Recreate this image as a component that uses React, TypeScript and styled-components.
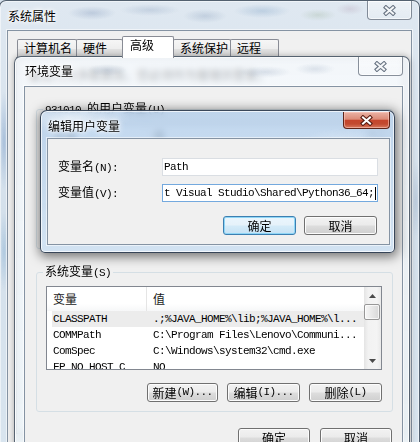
import React from "react";
import styled, { createGlobalStyle, css } from "styled-components";

const CJK = `"Noto Sans CJK SC", "Noto Sans", sans-serif`;
const MONO = `"Liberation Mono", "DejaVu Sans Mono", "Noto Sans CJK SC", monospace`;

const GlobalStyle = createGlobalStyle`
  html, body { margin: 0; padding: 0; }
  body {
    width: 420px;
    height: 442px;
    overflow: hidden;
    background: #d6e1ec;
    font-family: ${CJK};
    font-size: 12px;
    color: #000;
  }
  *, *::before, *::after { box-sizing: border-box; }
`;

const Lat = styled.span`
  font-family: ${MONO};
  font-size: 11px;
  letter-spacing: -0.6px;
`;

const Desktop = styled.div`
  position: relative;
  width: 420px;
  height: 442px;
  overflow: hidden;
`;

/* ---------- window frames ---------- */

const frameBase = css`
  position: absolute;
  display: flex;
  flex-direction: column;
  border: 1px solid rgba(38, 52, 70, 0.75);
  border-radius: 7px 7px 5px 5px;
`;

const SysWindow = styled.div`
  ${frameBase}
  left: -1px;
  top: 0;
  width: 421px;
  height: 480px;
  padding: 0 7px 8px 7px;
  background:
    radial-gradient(24px 7px at 92px 12px, rgba(70, 100, 150, 0.22), transparent),
    radial-gradient(30px 6px at 150px 9px, rgba(90, 120, 160, 0.2), transparent),
    radial-gradient(22px 7px at 205px 15px, rgba(80, 110, 150, 0.2), transparent),
    radial-gradient(28px 7px at 262px 10px, rgba(70, 120, 170, 0.22), transparent),
    radial-gradient(18px 6px at 318px 14px, rgba(120, 150, 110, 0.2), transparent),
    radial-gradient(14px 6px at 350px 8px, rgba(150, 110, 140, 0.18), transparent),
    radial-gradient(5px 50px at 4px 140px, rgba(60, 110, 175, 0.3), transparent),
    radial-gradient(5px 40px at 4px 250px, rgba(80, 140, 190, 0.28), transparent),
    radial-gradient(5px 40px at 416px 200px, rgba(90, 120, 160, 0.2), transparent),
    linear-gradient(180deg, #dfe8f1 0%, #d4e0eb 45%, #d9e5ef 100%);
  box-shadow: inset 0 0 0 1px rgba(255, 255, 255, 0.5);
`;

const EnvWindow = styled.div`
  ${frameBase}
  left: 14px;
  top: 56px;
  width: 396px;
  height: 404px;
  padding: 0 6px 8px 9px;
  background:
    radial-gradient(20px 6px at 92px 13px, rgba(90, 115, 150, 0.2), transparent),
    radial-gradient(26px 6px at 250px 15px, rgba(90, 115, 150, 0.18), transparent),
    radial-gradient(20px 6px at 300px 12px, rgba(90, 115, 150, 0.16), transparent),
    linear-gradient(180deg, rgba(240, 245, 250, 0.7) 0%, rgba(232, 242, 248, 0.66) 100%);
  backdrop-filter: blur(3px);
  box-shadow: 0 0 6px rgba(0, 0, 0, 0.3), inset 0 0 0 1px rgba(255, 255, 255, 0.75);
`;

const EditDialog = styled.div`
  ${frameBase}
  left: 40px;
  top: 110px;
  width: 355px;
  height: 143px;
  padding: 0 4px 7px 6px;
  background:
    radial-gradient(60px 16px at 30px 6px, rgba(255, 255, 255, 0.5), transparent),
    radial-gradient(40px 12px at 300px 30px, rgba(255, 255, 255, 0.25), transparent),
    linear-gradient(180deg, rgba(178, 205, 234, 0.8) 0%, rgba(190, 214, 238, 0.8) 50%, rgba(204, 224, 243, 0.82) 100%);
  backdrop-filter: blur(3px);
  border-color: rgba(30, 44, 62, 0.85);
  box-shadow: 1px 2px 11px 2px rgba(0, 0, 0, 0.5), inset 0 0 0 1px rgba(255, 255, 255, 0.7);
`;

const TitleBar = styled.div<{ $h: number }>`
  display: flex;
  justify-content: space-between;
  align-items: flex-start;
  height: ${(p) => p.$h}px;
  flex: none;
`;

const TitleText = styled.div<{ $mt: number }>`
  margin: ${(p) => p.$mt}px 0 0 1px;
  line-height: 15px;
  font-size: 12px;
  white-space: nowrap;
  text-shadow: 0 0 6px #fff, 0 0 5px #fff, 0 0 2px #fff;
`;

const CloseBtn = styled.div<{ $w: number; $h: number; $mt: number; $active?: boolean }>`
  width: ${(p) => p.$w}px;
  height: ${(p) => p.$h}px;
  margin-top: ${(p) => p.$mt}px;
  flex: none;
  display: flex;
  align-items: center;
  justify-content: center;
  border: 1px solid rgba(45, 58, 75, 0.55);
  border-top: none;
  border-radius: 0 0 4px 4px;
  background: linear-gradient(rgba(255, 255, 255, 0.45), rgba(255, 255, 255, 0.18));
  box-shadow: inset 0 0 0 1px rgba(255, 255, 255, 0.6);
  ${(p) =>
    p.$active &&
    css`
      border-color: #5e2419;
      background: linear-gradient(#eab3a5 0%, #dc8b78 45%, #c5452c 52%, #c24a30 75%, #d87a60 100%);
      box-shadow: inset 0 0 0 1px rgba(255, 205, 195, 0.55);
    `}
`;

const XGlyph = ({ fill, stroke }: { fill: string; stroke: string }) => (
  <svg width="13" height="11" viewBox="0 0 13 11">
    <path d="M3 2.5 L10 8.5 M10 2.5 L3 8.5" stroke={stroke} strokeWidth="4.2" strokeLinecap="square" fill="none" />
    <path d="M3 2.5 L10 8.5 M10 2.5 L3 8.5" stroke={fill} strokeWidth="2" strokeLinecap="square" fill="none" />
  </svg>
);

const clientBase = css`
  flex: 1;
  min-height: 0;
  display: flex;
  flex-direction: column;
  background: #f0f0f0;
  border: 1px solid #8593a3;
  box-shadow: 0 0 0 1px rgba(255, 255, 255, 0.55);
`;

/* ---------- System properties client ---------- */

const SysClient = styled.div`
  ${clientBase}
`;

const TabStrip = styled.div`
  display: flex;
  align-items: flex-end;
  height: 21px;
  margin: 5px 0 0 9px;
  flex: none;
`;

const Tab = styled.div<{ $w: number; $active?: boolean }>`
  position: relative;
  width: ${(p) => p.$w}px;
  height: 18px;
  margin-left: -1px;
  padding: 1px 0 0 6px;
  line-height: 14px;
  white-space: nowrap;
  border: 1px solid #898c95;
  border-bottom: none;
  border-radius: 2px 2px 0 0;
  background: linear-gradient(#f6f6f6 0%, #eeeeee 50%, #e2e2e2 51%, #d9d9d9 100%);
  &:first-child { margin-left: 0; }
  ${(p) =>
    p.$active &&
    css`
      z-index: 1;
      height: 22px;
      margin-bottom: -1px;
      padding-left: 7px;
      background: #fff;
    `}
`;

const TabPanel = styled.div`
  margin: 0 7px 0 8px;
  height: 377px;
  flex: none;
  border: 1px solid #898c95;
  background: #fbfbfb;
  padding: 9px 12px;
`;

const PanelNote = styled.div`
  line-height: 16px;
  white-space: nowrap;
`;

/* ---------- environment variables client ---------- */

const EnvClient = styled.div`
  ${clientBase}
  padding: 0 9px 0 11px;
`;

const Group = styled.fieldset<{ $mt: number }>`
  margin: ${(p) => p.$mt}px 0 0;
  padding: 0 10px 9px 9px;
  border: 1px solid #d5dfe5;
  border-radius: 3px;
  min-width: 0;
  flex: none;
`;

const Legend = styled.legend`
  margin-left: -3px;
  padding: 0 2px;
  line-height: 14px;
  font-size: 12px;
  white-space: nowrap;
`;

const ListView = styled.div`
  margin-top: 6px;
  height: 84px;
  display: flex;
  border: 1px solid #828790;
  background: #fff;
`;

const ListMain = styled.div`
  flex: 1;
  min-width: 0;
  display: flex;
  flex-direction: column;
  overflow: hidden;
`;

const ListHeader = styled.div`
  display: flex;
  height: 24px;
  flex: none;
  background: linear-gradient(#ffffff 0%, #ffffff 70%, #f6f7f8 100%);
`;

const HeaderCell = styled.div<{ $w?: number }>`
  ${(p) => (p.$w ? `width: ${p.$w}px; flex: none; border-right: 1px solid #e5e5e5;` : "flex: 1;")}
  padding-left: 6px;
  line-height: 24px;
  font-size: 12px;
  color: #1a1a1a;
  white-space: nowrap;
`;

const Row = styled.div<{ $selected?: boolean }>`
  display: flex;
  height: 16px;
  flex: none;
  margin-left: 5px;
  background: ${(p) => (p.$selected ? "#ececec" : "transparent")};
`;

const Cell = styled.div<{ $w?: number; $pl: number }>`
  ${(p) => (p.$w ? `width: ${p.$w}px; flex: none;` : "flex: 1; min-width: 0;")}
  padding-left: ${(p) => p.$pl}px;
  font-family: ${MONO};
  font-size: 11px;
  letter-spacing: -0.6px;
  line-height: 16px;
  white-space: nowrap;
  overflow: hidden;
`;

const ScrollBar = styled.div`
  width: 17px;
  flex: none;
  display: flex;
  flex-direction: column;
  background: linear-gradient(to right, #e4e4e4 0%, #f2f2f2 25%, #f4f4f4 75%, #e9e9e9 100%);
`;

const ScrollArrow = styled.div`
  height: 17px;
  flex: none;
  display: flex;
  align-items: center;
  justify-content: center;
`;

const ScrollThumb = styled.div`
  height: 16px;
  flex: none;
  margin-right: 1px;
  border: 1px solid #979797;
  border-radius: 2px;
  background: linear-gradient(to right, #f6f6f6, #e8e8e8 50%, #d8d8d8);
  box-shadow: inset 0 0 0 1px rgba(255, 255, 255, 0.7);
`;

const ScrollTrack = styled.div`
  flex: 1;
`;

const Arrow = ({ up }: { up?: boolean }) => (
  <svg width="7" height="4" viewBox="0 0 7 4">
    <polygon points={up ? "0,4 3.5,0 7,4" : "0,0 7,0 3.5,4"} fill="#4a4a4a" />
  </svg>
);

const ButtonRow = styled.div<{ $mt: number; $gap: number; $mr?: number }>`
  display: flex;
  justify-content: flex-end;
  gap: ${(p) => p.$gap}px;
  margin-top: ${(p) => p.$mt}px;
  margin-right: ${(p) => p.$mr ?? 0}px;
  flex: none;
`;

const Button = styled.div<{ $w: number; $default?: boolean }>`
  width: ${(p) => p.$w}px;
  height: 19px;
  display: flex;
  align-items: center;
  justify-content: center;
  line-height: 17px;
  font-size: 12px;
  white-space: nowrap;
  border: 1px solid #707070;
  border-radius: 3px;
  background: linear-gradient(#f2f2f2 0%, #ebebeb 48%, #dddddd 52%, #cfcfcf 100%);
  box-shadow: inset 0 0 0 1px #fcfcfc;
  ${(p) =>
    p.$default &&
    css`
      border-color: #3c7fb1;
      background: linear-gradient(#eaf6fd 0%, #e6f2fa 48%, #d4ebf8 52%, #c6e2f5 100%);
      box-shadow: inset 0 0 0 1px #8fd6f6;
    `}
`;

/* ---------- edit dialog client ---------- */

const DialogClient = styled.div`
  ${clientBase}
  padding: 19px 11px 0 10px;
`;

const FieldRow = styled.div`
  display: flex;
  align-items: center;
  height: 18px;
  flex: none;
  & + & { margin-top: 8px; }
`;

const FieldLabel = styled.div`
  width: 104px;
  flex: none;
  line-height: 16px;
  white-space: nowrap;
`;

const TextBox = styled.div<{ $focused?: boolean }>`
  flex: 1;
  min-width: 0;
  height: 18px;
  display: flex;
  align-items: center;
  padding: 0 1px 0 1px;
  overflow: hidden;
  white-space: nowrap;
  line-height: 16px;
  background: #fff;
  border: 1px solid ${(p) => (p.$focused ? "#74a9de" : "#dadee3")};
`;

const Caret = styled.span`
  flex: none;
  width: 1px;
  height: 13px;
  margin-left: 1px;
  background: #000;
`;

/* ---------- data ---------- */

const tabs = [
  { label: "计算机名", w: 60 },
  { label: "硬件", w: 47 },
  { label: "高级", w: 52, active: true },
  { label: "系统保护", w: 58 },
  { label: "远程", w: 49 },
];

const userRows: [string, string][] = [
  ["Path", "C:\\Users\\931010\\AppData\\Local\\..."],
  ["TEMP", "%USERPROFILE%\\AppData\\Local\\Temp"],
  ["TMP", "%USERPROFILE%\\AppData\\Local\\Temp"],
];

const systemRows: [string, string][] = [
  ["CLASSPATH", ".;%JAVA_HOME%\\lib;%JAVA_HOME%\\l..."],
  ["COMMPath", "C:\\Program Files\\Lenovo\\Communi..."],
  ["ComSpec", "C:\\Windows\\system32\\cmd.exe"],
  ["FP_NO_HOST_C", "NO"],
];

const VarList = ({ rows, selected }: { rows: [string, string][]; selected?: number }) => (
  <ListView>
    <ListMain>
      <ListHeader>
        <HeaderCell $w={100}>变量</HeaderCell>
        <HeaderCell>值</HeaderCell>
      </ListHeader>
      {rows.map(([name, value], i) => (
        <Row key={name} $selected={i === selected}>
          <Cell $w={95} $pl={1}>{name}</Cell>
          <Cell $pl={6}>{value}</Cell>
        </Row>
      ))}
    </ListMain>
    <ScrollBar>
      <ScrollArrow><Arrow up /></ScrollArrow>
      <ScrollThumb />
      <ScrollTrack />
      <ScrollArrow><Arrow /></ScrollArrow>
    </ScrollBar>
  </ListView>
);

const GroupButtons = ({ n, e, d }: { n: string; e: string; d: string }) => (
  <ButtonRow $mt={13} $gap={9}>
    <Button $w={71}>新建<Lat>({n})...</Lat></Button>
    <Button $w={73}>编辑<Lat>({e})...</Lat></Button>
    <Button $w={73}>删除<Lat>({d})</Lat></Button>
  </ButtonRow>
);

export default function App() {
  return (
    <>
      <GlobalStyle />
      <Desktop>
        <SysWindow>
          <TitleBar $h={29}>
            <TitleText $mt={7}>系统属性</TitleText>
            <CloseBtn $w={45} $h={19} $mt={0}>
              <XGlyph fill="#f4f6f8" stroke="#6a7584" />
            </CloseBtn>
          </TitleBar>
          <SysClient>
            <TabStrip>
              {tabs.map((t) => (
                <Tab key={t.label} $w={t.w} $active={t.active}>
                  {t.label}
                </Tab>
              ))}
            </TabStrip>
            <TabPanel>
              <PanelNote>要进行大多数更改，您必须作为管理员登录。</PanelNote>
            </TabPanel>
          </SysClient>
        </SysWindow>

        <EnvWindow>
          <TitleBar $h={29}>
            <TitleText $mt={6}>环境变量</TitleText>
            <CloseBtn $w={45} $h={19} $mt={0}>
              <XGlyph fill="#f4f6f8" stroke="#6a7584" />
            </CloseBtn>
          </TitleBar>
          <EnvClient>
            <Group $mt={14}>
              <Legend><Lat>931010 </Lat>的用户变量<Lat>(U)</Lat></Legend>
              <VarList rows={userRows} />
              <GroupButtons n="N" e="E" d="D" />
            </Group>
            <Group $mt={15}>
              <Legend>系统变量<Lat>(S)</Lat></Legend>
              <VarList rows={systemRows} selected={0} />
              <GroupButtons n="W" e="I" d="L" />
            </Group>
            <ButtonRow $mt={16} $gap={10} $mr={1}>
              <Button $w={72}>确定</Button>
              <Button $w={72}>取消</Button>
            </ButtonRow>
          </EnvClient>
        </EnvWindow>

        <EditDialog>
          <TitleBar $h={27}>
            <TitleText $mt={7}>编辑用户变量</TitleText>
            <CloseBtn $w={47} $h={17} $mt={1} $active>
              <XGlyph fill="#ffffff" stroke="#5a1d12" />
            </CloseBtn>
          </TitleBar>
          <DialogClient>
            <FieldRow>
              <FieldLabel>变量名<Lat>(N):</Lat></FieldLabel>
              <TextBox>
                <Lat>Path</Lat>
              </TextBox>
            </FieldRow>
            <FieldRow>
              <FieldLabel>变量值<Lat>(V):</Lat></FieldLabel>
              <TextBox $focused>
                <Lat>t Visual Studio\Shared\Python36_64;</Lat>
                <Caret />
              </TextBox>
            </FieldRow>
            <ButtonRow $mt={14} $gap={8} $mr={1}>
              <Button $w={73} $default>确定</Button>
              <Button $w={73}>取消</Button>
            </ButtonRow>
          </DialogClient>
        </EditDialog>
      </Desktop>
    </>
  );
}
